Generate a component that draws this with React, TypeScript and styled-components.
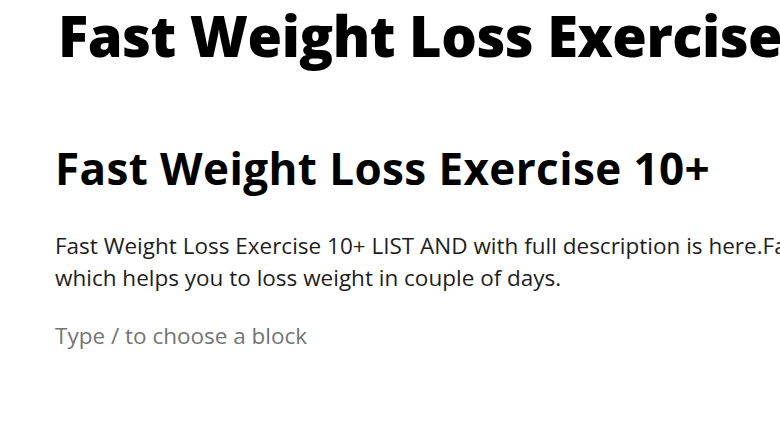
import React from "react";
import styled, { createGlobalStyle } from "styled-components";

const GlobalStyle = createGlobalStyle`
  html, body {
    margin: 0;
    padding: 0;
    background: #ffffff;
    overflow: hidden;
  }
  body {
    font-family: "Open Sans", "Noto Sans", sans-serif;
    color: #1e1e1e;
  }
`;

const Editor = styled.div`
  width: 780px;
  height: 440px;
  overflow: hidden;
  display: flex;
  flex-direction: column;
  padding-left: 55px;
  box-sizing: border-box;
`;

const PostTitle = styled.h1`
  margin: 0;
  padding: 0 0 0 3px;
  font-size: 56px;
  line-height: 70px;
  font-weight: 800;
  color: #000000;
  white-space: nowrap;
  letter-spacing: -0.5px;
`;

const Heading = styled.h2`
  margin: 70px 0 0 0;
  font-size: 44px;
  line-height: 56px;
  font-weight: 700;
  color: #000000;
  white-space: nowrap;
  letter-spacing: 0.4px;
`;

const Paragraph = styled.p<{ $muted?: boolean }>`
  margin: ${({ $muted }) => ($muted ? "26px 0 0 0" : "34px 0 0 0")};
  font-size: 22.5px;
  line-height: 32px;
  white-space: nowrap;
  color: ${({ $muted }) => ($muted ? "#757575" : "#1e1e1e")};
`;

export default function App() {
  return (
    <>
      <GlobalStyle />
      <Editor>
        <PostTitle>Fast Weight Loss Exercise 10+</PostTitle>
        <Heading>Fast Weight Loss Exercise 10+</Heading>
        <Paragraph>
          Fast Weight Loss Exercise 10+ LIST AND with full description is here.Fast weight loss exercise
          <br />
          which helps you to loss weight in couple of days.
        </Paragraph>
        <Paragraph $muted>Type / to choose a block</Paragraph>
      </Editor>
    </>
  );
}
